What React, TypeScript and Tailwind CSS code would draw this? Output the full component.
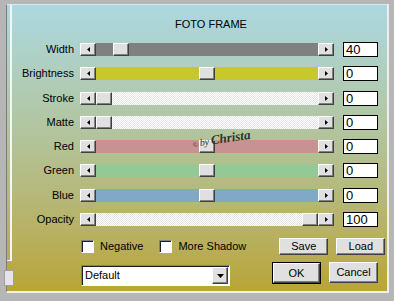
const font = "font-['Liberation_Sans',Arial,sans-serif]";

const raised =
  "bg-[#e0e0e0] border border-t-white border-l-white border-r-[#404040] border-b-[#404040] shadow-[inset_-1px_-1px_0_#808080]";
const sunken =
  "bg-white border border-t-[#808080] border-l-[#808080] border-r-white border-b-white shadow-[inset_1px_1px_0_#202020]";

type Row = { label: string; track: string; thumb: number; value: string };

const checker =
  "bg-[repeating-conic-gradient(#e4e4e4_0_25%,#ffffff_0_50%)] bg-[length:2px_2px]";

const rows: Row[] = [
  { label: "Width", track: "bg-[#808080]", thumb: 17, value: "40" },
  { label: "Brightness", track: "bg-[#c8c82c]", thumb: 103, value: "0" },
  { label: "Stroke", track: checker, thumb: 0, value: "0" },
  { label: "Matte", track: checker, thumb: 0, value: "0" },
  { label: "Red", track: "bg-[#c89292]", thumb: 103, value: "0" },
  { label: "Green", track: "bg-[#94c894]", thumb: 103, value: "0" },
  { label: "Blue", track: "bg-[#82a8c8]", thumb: 103, value: "0" },
  { label: "Opacity", track: checker, thumb: 206, value: "100" },
];

const Arrow = ({ dir }: { dir: "left" | "right" | "down" }) => (
  <svg width="7" height="7" viewBox="0 0 7 7">
    {dir === "left" && <polygon points="5,1 5,6 2,3.5" fill="#000" />}
    {dir === "right" && <polygon points="2,1 2,6 5,3.5" fill="#000" />}
    {dir === "down" && <polygon points="0,2 7,2 3.5,6" fill="#000" />}
  </svg>
);

const Slider = ({ row }: { row: Row }) => (
  <div className="flex items-center h-[13px]">
    <div className="w-[62px] text-right text-[11px] leading-none text-black">{row.label}</div>
    <div className="w-[6px]" />
    <div className={`w-[16px] h-[13px] flex items-center justify-center ${raised}`}>
      <Arrow dir="left" />
    </div>
    <div className={`relative w-[222px] h-[13px] ${row.track}`}>
      <div className={`absolute top-0 w-[16px] h-[13px] ${raised}`} style={{ left: row.thumb }} />
    </div>
    <div className={`w-[16px] h-[13px] flex items-center justify-center ${raised}`}>
      <Arrow dir="right" />
    </div>
    <div className="w-[9px]" />
    <div className="w-[35px] h-[15px] bg-white border border-black flex items-center pl-[2px] text-[13px] leading-none">
      {row.value}
    </div>
  </div>
);

const Check = ({ label }: { label: string }) => (
  <div className="flex items-center gap-[6px]">
    <div className={`w-[13px] h-[13px] ${sunken}`} />
    <span className="text-[11px] leading-none">{label}</span>
  </div>
);

export default function App() {
  return (
    <div className={`w-[394px] h-[301px] bg-[#b6b6b6] pt-[4px] pl-[6px] pr-[5px] pb-[8px] ${font}`}>
      <div className="relative h-full flex border-l border-l-[#7c7c7c] border-t border-t-[#d8e8ec] border-r-2 border-r-[#eeeeee] border-b-2 border-b-[#f0f0ea] bg-gradient-to-b from-[#acd8e1] via-[#b2c49c] via-45% to-[#b9a534]">
        <div className="w-[5px] h-[256px] border-r-2 border-r-[#f2f6f4] border-b border-b-[#f2f2f2] shrink-0" />
        <div className="absolute left-[-3px] top-[265px] w-[10px] h-[16px] bg-[#e8e2ee] border border-[#a0a0a0]" />
        <div className="flex flex-col">
          <div className="pl-[25px] w-[373px] text-center text-[11px] leading-[14px] mt-[12px]">FOTO FRAME</div>
          <div className="flex flex-col gap-[11.3px] mt-[12px]">
            {rows.map((r) => (
              <Slider key={r.label} row={r} />
            ))}
          </div>
          <div className="flex items-center mt-[12px] h-[17px]">
            <div className="w-[69px]" />
            <Check label="Negative" />
            <div className="w-[16px]" />
            <Check label="More Shadow" />
            <div className="w-[33px]" />
            <div className={`w-[49px] h-[17px] flex items-center justify-center text-[11px] ${raised}`}>Save</div>
            <div className="w-[8px]" />
            <div className={`w-[49px] h-[17px] flex items-center justify-center text-[11px] ${raised}`}>Load</div>
          </div>
          <div className="flex items-start mt-[7px]">
            <div className="w-[69px]" />
            <div className={`mt-[3px] w-[149px] h-[21px] flex items-center ${sunken}`}>
              <span className="flex-1 pl-[3px] text-[11px]">Default</span>
              <div className={`w-[16px] h-[17px] mr-[1px] flex items-center justify-center ${raised}`}>
                <Arrow dir="down" />
              </div>
            </div>
            <div className="w-[42px]" />
            <div className="w-[49px] h-[22px] border border-black">
              <div className={`h-full flex items-center justify-center text-[11px] ${raised}`}>OK</div>
            </div>
            <div className="w-[8px]" />
            <div className={`w-[49px] h-[21px] flex items-center justify-center text-[11px] ${raised}`}>Cancel</div>
          </div>
        </div>
        <div className="absolute left-[185px] top-[127px] -rotate-[8deg] flex items-end gap-[2px] text-[#303030] font-['Liberation_Serif',serif] italic pointer-events-none">
          <span className="text-[7px] leading-none">©</span>
          <span className="text-[10px] leading-none">by</span>
          <span className="text-[13px] leading-none font-bold">Christa</span>
        </div>
      </div>
    </div>
  );
}
